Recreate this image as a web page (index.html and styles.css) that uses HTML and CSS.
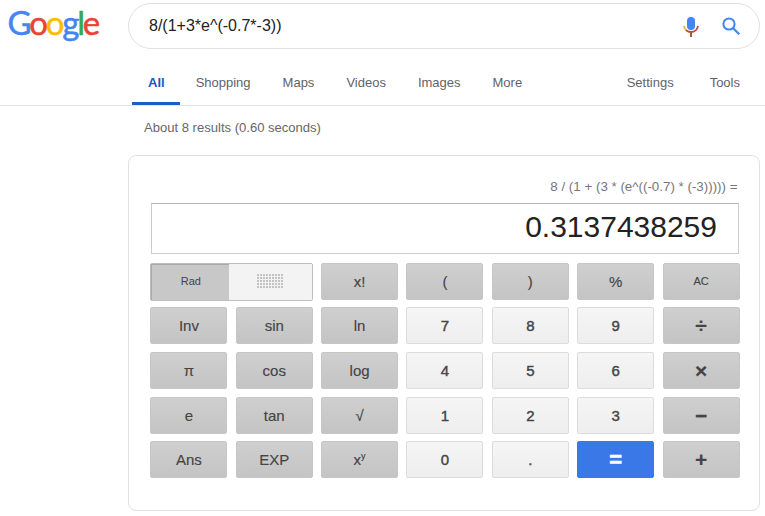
FILE: index.html
```html
<!DOCTYPE html>
<html lang="en">
<head>
<meta charset="utf-8">
<title>8/(1+3*e^(-0.7*-3)) - Google Search</title>
<link rel="stylesheet" href="styles.css">
</head>
<body>
<header class="top">
  <div class="logo"><span class="b">G</span><span class="r">o</span><span class="y">o</span><span class="b">g</span><span class="g">l</span><span class="r">e</span></div>
  <div class="search">
    <span class="query">8/(1+3*e^(-0.7*-3))</span>
    <svg class="mic" width="16" height="20" viewBox="0 0 16 20">
      <rect x="4" y="0" width="8" height="13" rx="4" fill="#4285f4"/>
      <path d="M1 9C1.5 12.5 4.5 15 8 15" fill="none" stroke="#e8b730" stroke-width="1.8"/>
      <path d="M3 13.2C4.3 14.4 6 15 8 15C11.5 15 14.5 12.5 15 9" fill="none" stroke="#c5483c" stroke-width="1.8"/>
      <rect x="7" y="15" width="2" height="5" fill="#a5573f"/>
    </svg>
    <svg class="lens" width="18" height="18" viewBox="0 0 18 18">
      <circle cx="7" cy="7" r="5.6" fill="none" stroke="#4285f4" stroke-width="2"/>
      <path d="M11 11L17.3 17.3" stroke="#4285f4" stroke-width="2.2"/>
    </svg>
  </div>
</header>
<nav class="tabs">
  <a class="tab active">All</a>
  <a class="tab">Shopping</a>
  <a class="tab">Maps</a>
  <a class="tab">Videos</a>
  <a class="tab">Images</a>
  <a class="tab">More</a>
  <span class="spacer"></span>
  <a class="tab settings">Settings</a>
  <a class="tab">Tools</a>
</nav>
<p class="stats">About 8 results (0.60 seconds)</p>
<section class="card">
  <div class="expr">8 / (1 + (3 * (e^((-0.7) * (-3))))) =</div>
  <div class="display">0.3137438259</div>
  <div class="keys">
    <div class="toggle"><span class="rad">Rad</span><span class="deg"><span class="dots"></span></span></div>
    <button class="key op">x!</button>
    <button class="key op">(</button>
    <button class="key op">)</button>
    <button class="key op">%</button>
    <button class="key op small">AC</button>
    <button class="key op">Inv</button>
    <button class="key op">sin</button>
    <button class="key op">ln</button>
    <button class="key num">7</button>
    <button class="key num">8</button>
    <button class="key num">9</button>
    <button class="key op sym">÷</button>
    <button class="key op">π</button>
    <button class="key op">cos</button>
    <button class="key op">log</button>
    <button class="key num">4</button>
    <button class="key num">5</button>
    <button class="key num">6</button>
    <button class="key op sym">×</button>
    <button class="key op">e</button>
    <button class="key op">tan</button>
    <button class="key op">√</button>
    <button class="key num">1</button>
    <button class="key num">2</button>
    <button class="key num">3</button>
    <button class="key op sym">−</button>
    <button class="key op">Ans</button>
    <button class="key op">EXP</button>
    <button class="key op">x<sup>y</sup></button>
    <button class="key num">0</button>
    <button class="key num">.</button>
    <button class="key eq">=</button>
    <button class="key op sym">+</button>
  </div>
</section>
</body>
</html>
```
FILE: styles.css
```css
* { box-sizing: border-box; }
html, body { margin: 0; padding: 0; }
body {
  width: 765px;
  height: 516px;
  overflow: hidden;
  background: #fff;
  font-family: "Liberation Sans", Arial, sans-serif;
  color: #222;
}
.top {
  display: flex;
  align-items: flex-start;
  padding: 3px 5px 0 7.5px;
  height: 66px;
}
.logo {
  width: 120.5px;
  margin-top: -3px;
  font-family: Lato, sans-serif;
  font-size: 33px;
  line-height: 44px;
  letter-spacing: -2.2px;
  -webkit-text-stroke: 0.5px;
}
.b { color: #4285f4; }
.r { color: #ea4335; }
.y { color: #fbbc05; }
.g { color: #34a853; }
.search {
  width: 632px;
  height: 46px;
  display: flex;
  align-items: center;
  padding: 0 19px 0 20px;
  border: 1px solid #dfe1e5;
  border-radius: 23px;
}
.query {
  flex: 1;
  font-size: 16px;
  color: #222;
}
.mic { margin-right: 23px; margin-top: 1px; }
.lens { display: block; }
.tabs {
  display: flex;
  height: 40px;
  padding: 0 9px 0 132px;
  border-bottom: 1px solid #e4e4e4;
  font-size: 13px;
  color: #5f6368;
}
.tab {
  display: block;
  padding: 7px 16px 0;
  height: 39px;
  line-height: 20px;
}
.tab.active {
  padding-right: 15px;
  color: #1a56c4;
  font-weight: bold;
  border-bottom: 3px solid #1a60c8;
}
.tab.settings { margin-right: 4px; }
.spacer { flex: 1; }
.stats {
  margin: 0;
  padding: 14px 0 0 144px;
  height: 49px;
  font-size: 13.05px;
  line-height: 16px;
  color: #666;
}
.card {
  width: 632px;
  height: 356px;
  margin-left: 128px;
  padding: 23px 19px 0 21px;
  border: 1px solid #dfe1e5;
  border-radius: 8px;
}
.expr {
  height: 24px;
  padding-right: 2.5px;
  text-align: right;
  font-size: 13.35px;
  line-height: 15px;
  color: #777;
}
.display {
  width: 588px;
  height: 51px;
  margin-left: 1px;
  padding-right: 21px;
  border: 1px solid #ccc;
  border-top-color: #b5b5b5;
  text-align: right;
  font-size: 30px;
  line-height: 45px;
  color: #222;
}
.keys {
  display: grid;
  grid-template-columns: repeat(7, 77px);
  grid-auto-rows: 37px;
  column-gap: 8.36px;
  row-gap: 7.65px;
  margin: 8.6px 0 0 0.4px;
}
.key {
  padding: 0;
  margin: 0;
  border: 1px solid #c4c4c4;
  border-radius: 2px;
  font-family: "Liberation Sans", Arial, sans-serif;
  font-size: 15px;
  color: #444;
  -webkit-text-stroke: 0.15px;
}
.op {
  background: linear-gradient(#cfcfcf, #c4c4c4);
  border-color: #c6c6c6;
}
.num {
  background: linear-gradient(#f5f5f5, #eeeeee);
  border-color: #dcdcdc;
  color: #444;
  font-size: 15px;
  -webkit-text-stroke: 0.4px;
}
.small { font-size: 11px; }
.sym {
  font-size: 21px;
  font-weight: bold;
  line-height: 1;
}
.eq {
  background: #3b78e7;
  border-color: #3b78e7;
  color: #fff;
  font-size: 22px;
  font-weight: bold;
  line-height: 1;
  -webkit-text-stroke: 0.5px;
}
sup {
  font-size: 9px;
  line-height: 0;
}
.toggle {
  grid-column: span 2;
  display: flex;
  border: 1px solid #bdbdbd;
  border-radius: 2px;
  height: 38px;
}
.rad {
  width: 78px;
  background: #c8c8c8;
  border-left: 1px solid #aaa;
  border-top: 1px solid #aaa;
  text-align: center;
  font-size: 11px;
  line-height: 33px;
  color: #444;
}
.deg {
  flex: 1;
  display: flex;
  align-items: center;
  justify-content: center;
  background: #f3f3f3;
}
.dots {
  width: 27px;
  height: 15px;
  background-image: radial-gradient(circle at 1px 1px, #c2c2c2 0.8px, transparent 1.1px);
  background-size: 3px 3px;
}
```
